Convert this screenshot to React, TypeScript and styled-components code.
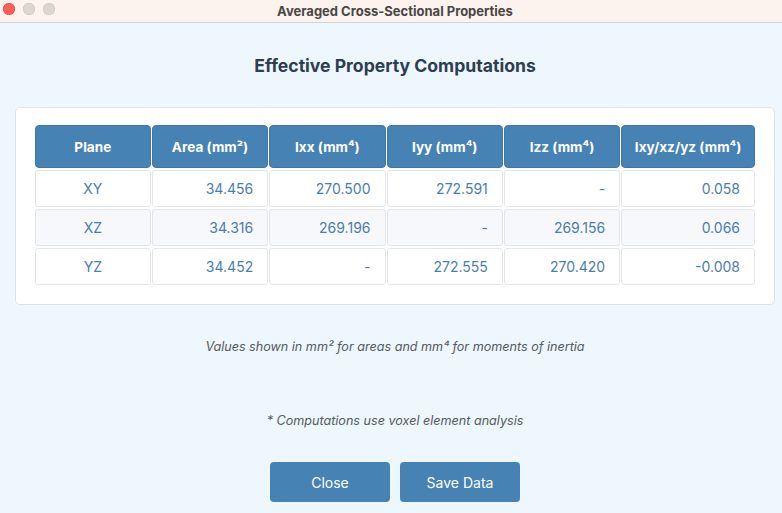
import styled, { createGlobalStyle } from "styled-components";

const GlobalStyle = createGlobalStyle`
  html, body {
    margin: 0;
    padding: 0;
    overflow: hidden;
    background: #eef6fe;
  }
  body {
    font-family: Inter, "Noto Sans", "Liberation Sans", sans-serif;
  }
`;

const Window = styled.div`
  width: 790px;
  height: 513px;
  display: flex;
  flex-direction: column;
  background: #eef6fe;
`;

const TitleBar = styled.div`
  position: relative;
  height: 23px;
  flex: none;
  display: flex;
  align-items: center;
  justify-content: center;
  background: #fcf3ee;
  border-bottom: 1px solid #d6d2cf;
  box-sizing: border-box;
  font-size: 13px;
  font-weight: 700;
  color: #4a4644;
`;

const Lights = styled.div`
  position: absolute;
  left: 3px;
  top: 3px;
  display: flex;
  gap: 8px;
`;

const Light = styled.span<{ $color: string; $ring: string }>`
  width: 12px;
  height: 12px;
  border-radius: 50%;
  background: ${({ $color }) => $color};
  box-shadow: inset 0 0 0 0.5px ${({ $ring }) => $ring};
`;

const Content = styled.div`
  flex: 1;
  display: flex;
  flex-direction: column;
  align-items: center;
  padding: 0 15px;
`;

const Heading = styled.h1`
  margin: 31px 0 0;
  height: 24px;
  line-height: 24px;
  font-size: 17.6px;
  font-weight: 700;
  color: #2c3e50;
`;

const Card = styled.div`
  margin-top: 29px;
  align-self: stretch;
  background: #fff;
  border: 1px solid #dde3ea;
  border-radius: 5px;
  padding: 17px 18px 19px;
`;

const Table = styled.table`
  width: 100%;
  border-collapse: separate;
  border-spacing: 1px 2px;
  margin: -2px 0;
  font-size: 14px;
`;

const HeadCell = styled.th`
  height: 43px;
  padding: 0 8px;
  box-sizing: border-box;
  background: #4682b4;
  color: #fff;
  font-size: 13.6px;
  font-weight: 700;
  text-align: center;
  border-radius: 4px;
  border: 1px solid #3f76a4;
  white-space: nowrap;
`;

const Row = styled.tr<{ $alt?: boolean }>`
  background: ${({ $alt }) => ($alt ? "#f6f8fb" : "#fff")};
`;

const Cell = styled.td<{ $center?: boolean }>`
  height: 37px;
  box-sizing: border-box;
  padding: 0 14px;
  border: 1px solid #e3e7ec;
  border-radius: 3px;
  color: #4a7db0;
  text-align: ${({ $center }) => ($center ? "center" : "right")};
`;

const Note = styled.p<{ $top: number }>`
  margin: ${({ $top }) => $top}px 0 0;
  font-size: 12.6px;
  font-style: italic;
  color: #555a60;
  line-height: 16px;
`;

const Buttons = styled.div`
  margin-top: 33px;
  display: flex;
  gap: 10px;
`;

const Button = styled.button`
  width: 120px;
  height: 40px;
  border: none;
  border-radius: 4px;
  background: #4682b4;
  color: #fff;
  font-family: inherit;
  font-size: 14px;
  cursor: pointer;
`;

const headers = ["Plane", "Area (mm²)", "Ixx (mm⁴)", "Iyy (mm⁴)", "Izz (mm⁴)", "Ixy/xz/yz (mm⁴)"];

const rows = [
  ["XY", "34.456", "270.500", "272.591", "-", "0.058"],
  ["XZ", "34.316", "269.196", "-", "269.156", "0.066"],
  ["YZ", "34.452", "-", "272.555", "270.420", "-0.008"],
];

const colWidths = [117, 117, 117, 117, 117, 134];

export default function App() {
  return (
    <>
      <GlobalStyle />
      <Window>
        <TitleBar>
          <Lights>
            <Light $color="#fe5f57" $ring="#e0443e" />
            <Light $color="#dcd6d2" $ring="#c9c2bd" />
            <Light $color="#dcd6d2" $ring="#c9c2bd" />
          </Lights>
          Averaged Cross-Sectional Properties
        </TitleBar>
        <Content>
          <Heading>Effective Property Computations</Heading>
          <Card>
            <Table>
              <colgroup>
                {colWidths.map((w, i) => (
                  <col key={i} style={{ width: w }} />
                ))}
              </colgroup>
              <thead>
                <tr>
                  {headers.map((h) => (
                    <HeadCell key={h}>{h}</HeadCell>
                  ))}
                </tr>
              </thead>
              <tbody>
                {rows.map((r, i) => (
                  <Row key={r[0]} $alt={i === 1}>
                    {r.map((v, j) => (
                      <Cell key={j} $center={j === 0}>
                        {v}
                      </Cell>
                    ))}
                  </Row>
                ))}
              </tbody>
            </Table>
          </Card>
          <Note $top={34}>Values shown in mm² for areas and mm⁴ for moments of inertia</Note>
          <Note $top={58}>* Computations use voxel element analysis</Note>
          <Buttons>
            <Button>Close</Button>
            <Button>Save Data</Button>
          </Buttons>
        </Content>
      </Window>
    </>
  );
}
